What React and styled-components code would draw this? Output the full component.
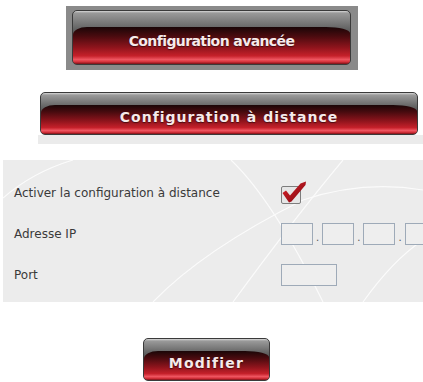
import React from "react";
import styled, { createGlobalStyle } from "styled-components";

const GlobalStyle = createGlobalStyle`
  html, body {
    margin: 0;
    padding: 0;
    background: #ffffff;
    font-family: "DejaVu Sans", Verdana, sans-serif;
  }
`;

const Page = styled.div`
  width: 423px;
  height: 382px;
  overflow: hidden;
  display: flex;
  flex-direction: column;
`;

const TopFrame = styled.div`
  margin: 6px 0 0 66px;
  width: 292px;
  height: 64px;
  box-sizing: border-box;
  background: #8a8a8a;
  padding: 4px 7px 5px 6px;
  display: flex;
`;

const RedButton = styled.div`
  position: relative;
  flex: ${(p) => (p.$fill ? 1 : "none")};
  width: ${(p) => p.$width || "auto"};
  height: ${(p) => p.$height || "100%"};
  box-sizing: border-box;
  border: 1px solid #3a3a3a;
  border-radius: 5px;
  overflow: hidden;
  background: linear-gradient(#d8d8d8 0px, #9a9a9a 2px, #6a6a6a 30%, #505050 45%);
  display: flex;
  align-items: center;
  justify-content: center;
  padding-top: ${(p) => p.$shift || "6px"};

  &::before {
    content: "";
    position: absolute;
    left: 0;
    right: 0;
    bottom: 0;
    top: 30%;
    border-radius: 14px 24px 0 0 / 8px 6px 0 0;
    background: linear-gradient(
      #1a0607 0%,
      #4a0b0f 25%,
      #8e141c 55%,
      #c5202a 78%,
      #ee5560 88%,
      #d8323c 94%,
      #7a1016 100%
    );
  }
`;

const ButtonLabel = styled.span`
  position: relative;
  color: #f6eaea;
  font-family: "DejaVu Sans", Verdana, sans-serif;
  font-weight: bold;
  font-size: ${(p) => p.$size || "14px"};
  letter-spacing: ${(p) => p.$spacing || "0px"};
  text-shadow: 0 1px 1px rgba(0, 0, 0, 0.5);
`;

const SecondBand = styled.div`
  margin-top: 22px;
  padding-left: 40px;
  display: flex;
  flex-direction: column;
`;

const BandFoot = styled.div`
  height: 9px;
  margin-left: -2px;
  background: #ebebeb;
`;

const FormPanel = styled.div`
  position: relative;
  margin: 16px 0 0 3px;
  height: 142px;
  background: #ececec;
  overflow: hidden;
  box-sizing: border-box;
  padding: 17px 0 0 11px;
  display: grid;
  grid-template-columns: 267px 1fr;
  grid-auto-rows: 41px;
  align-items: center;
`;

const Decor = styled.svg`
  position: absolute;
  left: 0;
  top: 0;
  pointer-events: none;
`;

const Label = styled.div`
  position: relative;
  font-size: 12px;
  color: #3a3a3a;
  margin-top: -10px;
`;

const Field = styled.div`
  position: relative;
  display: flex;
  align-items: flex-end;
  gap: 3px;
  margin-top: -10px;
`;

const Box = styled.div`
  width: ${(p) => p.$w}px;
  height: 22px;
  box-sizing: border-box;
  border: 1px solid #9eaab8;
  background: #eeeeee;
  flex: none;
`;

const Dot = styled.span`
  font-size: 10px;
  color: #555;
  line-height: 1;
  margin-bottom: 2px;
`;

const Footer = styled.div`
  margin: 36px 0 0 143px;
`;

function Check() {
  return (
    <svg width="26" height="24" viewBox="0 0 26 24">
      <defs>
        <linearGradient id="ck" x1="0" y1="0" x2="1" y2="1">
          <stop offset="0" stopColor="#e0202a" />
          <stop offset="1" stopColor="#7a0a10" />
        </linearGradient>
      </defs>
      <rect x="0.5" y="5.5" width="19" height="17" rx="1.5" fill="#e6e6e6" stroke="#7d7d7d" />
      <path
        d="M1.5 12 L5 9.5 L9 14.5 L19.5 2.5 L25 0.5 L24.5 4 L10.5 20.5 L8 21.5 Z"
        fill="url(#ck)"
      />
    </svg>
  );
}

export default function App() {
  return (
    <Page>
      <GlobalStyle />
      <TopFrame>
        <RedButton $fill>
          <ButtonLabel $spacing="-0.6px">Configuration avancée</ButtonLabel>
        </RedButton>
      </TopFrame>

      <SecondBand>
        <RedButton $width="378px" $height="43px">
          <ButtonLabel $spacing="1px">Configuration à distance</ButtonLabel>
        </RedButton>
        <BandFoot />
      </SecondBand>

      <FormPanel>
        <Decor width="420" height="142" viewBox="0 0 420 142">
          <g fill="none" stroke="#ffffff" strokeWidth="1.2" opacity="0.8">
            <path d="M0 38 Q30 12 70 0" />
            <path d="M228 0 Q270 40 320 142" />
            <path d="M340 0 Q290 60 230 142" />
            <path d="M150 142 Q200 90 300 40" />
            <path d="M300 40 Q360 20 420 30" />
            <path d="M360 142 Q390 100 420 80" />
          </g>
        </Decor>
        <Label>Activer la configuration à distance</Label>
        <Field>
          <Check />
        </Field>
        <Label>Adresse IP</Label>
        <Field>
          <Box $w={32} />
          <Dot>.</Dot>
          <Box $w={32} />
          <Dot>.</Dot>
          <Box $w={32} />
          <Dot>.</Dot>
          <Box $w={32} />
        </Field>
        <Label>Port</Label>
        <Field>
          <Box $w={56} />
        </Field>
      </FormPanel>

      <Footer>
        <RedButton $width="127px" $height="43px">
          <ButtonLabel $spacing="1.2px">Modifier</ButtonLabel>
        </RedButton>
      </Footer>
    </Page>
  );
}
